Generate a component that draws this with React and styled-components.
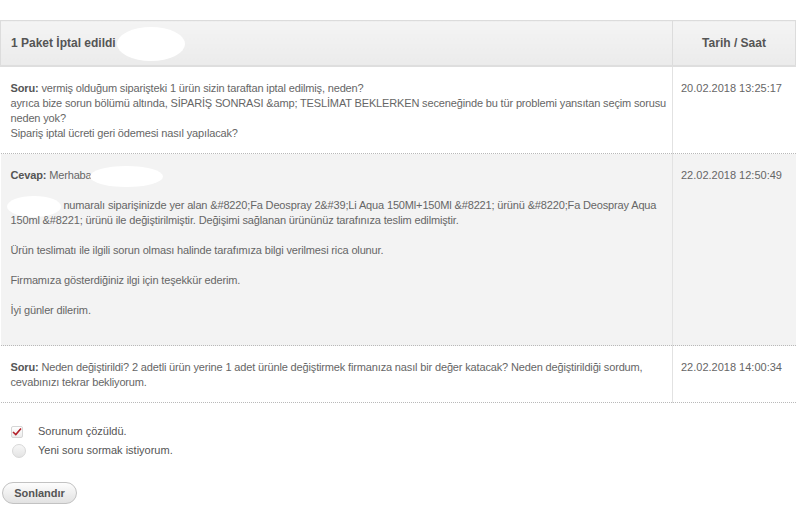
import React, { useState } from "react";
import styled, { createGlobalStyle } from "styled-components";

const GlobalStyle = createGlobalStyle`
  html, body {
    margin: 0;
    padding: 0;
    background: #fff;
  }
  body {
    font-family: "Liberation Sans", Arial, sans-serif;
    font-size: 11px;
    color: #666;
  }
`;

const messages = [
  {
    kind: "Soru",
    date: "20.02.2018 13:25:17",
    shaded: false,
    lines: [
      "vermiş olduğum siparişteki 1 ürün sizin taraftan iptal edilmiş, neden?",
      "ayrıca bize sorun bölümü altında, SİPARİŞ SONRASI &amp; TESLİMAT BEKLERKEN seceneğinde bu tür problemi yansıtan seçim sorusu neden yok?",
      "Sipariş iptal ücreti geri ödemesi nasıl yapılacak?",
    ],
  },
];

export default function App() {
  const [solved, setSolved] = useState(true);

  return (
    <Page>
      <GlobalStyle />
      <Table>
        <colgroup>
          <col style={{ width: 672 }} />
          <col />
        </colgroup>
        <thead>
          <tr>
            <HeadCell>
              1 Paket İptal edildi <Blot w={68} h={34} ml={-2} />
            </HeadCell>
            <HeadCell center>Tarih / Saat</HeadCell>
          </tr>
        </thead>
        <tbody>
          {messages.map((m, i) => (
            <Row key={i} shaded={m.shaded}>
              <TextCell>
                <Label>{m.kind}:</Label> {m.lines[0]}
                <br />
                {m.lines[1]}
                <br />
                {m.lines[2]}
              </TextCell>
              <DateCell>{m.date}</DateCell>
            </Row>
          ))}
          <Row shaded>
            <TextCell>
              <Label>Cevap:</Label> Merhaba <Blot w={73} h={21} ml={-4} />
              <br />
              <br />
              <Blot w={54} h={21} ml={-4} /> numaralı siparişinizde yer alan &amp;#8220;Fa Deospray 2&amp;#39;Li Aqua
              150Ml+150Ml &amp;#8221; ürünü &amp;#8220;Fa Deospray Aqua 150ml &amp;#8221; ürünü ile
              değiştirilmiştir. Değişimi sağlanan ürününüz tarafınıza teslim edilmiştir.
              <br />
              <br />
              Ürün teslimatı ile ilgili sorun olması halinde tarafımıza bilgi verilmesi rica olunur.
              <br />
              <br />
              Firmamıza gösterdiğiniz ilgi için teşekkür ederim.
              <br />
              <br />
              İyi günler dilerim.
              <br />
              <br />
            </TextCell>
            <DateCell>22.02.2018 12:50:49</DateCell>
          </Row>
          <Row>
            <TextCell>
              <Label>Soru:</Label> Neden değiştirildi? 2 adetli ürün yerine 1 adet ürünle değiştirmek
              firmanıza nasıl bir değer katacak? Neden değiştirildiği sordum, cevabınızı tekrar bekliyorum.
            </TextCell>
            <DateCell>22.02.2018 14:00:34</DateCell>
          </Row>
        </tbody>
      </Table>

      <Options>
        <Option onClick={() => setSolved(true)}>
          <CheckBox>
            {solved && (
              <svg width="10" height="9" viewBox="0 0 10 9">
                <path d="M1 5 L3.8 7.6 L9 1.4" fill="none" stroke="#b3202a" strokeWidth="1.6" />
              </svg>
            )}
          </CheckBox>
          Sorunum çözüldü.
        </Option>
        <Option onClick={() => setSolved(false)}>
          <Radio />
          Yeni soru sormak istiyorum.
        </Option>
      </Options>

      <Button>Sonlandır</Button>
    </Page>
  );
}

/* ================= STYLES ================= */
const Page = styled.div`
  width: 796px;
  padding-top: 20px;
`;

const Table = styled.table`
  width: 796px;
  border-collapse: collapse;
  table-layout: fixed;
`;

const HeadCell = styled.th`
  height: 44px;
  padding: 0 10px;
  text-align: ${({ center }) => (center ? "center" : "left")};
  font-size: 12px;
  font-weight: bold;
  color: #555;
  background: linear-gradient(to bottom, #f4f4f4, #ebebeb);
  border: 1px solid #dcdcdc;
  border-bottom: 2px solid #dedede;
  white-space: nowrap;
  overflow: visible;
`;

const Row = styled.tr`
  background: ${({ shaded }) => (shaded ? "#f3f3f3" : "#fff")};
  border-bottom: 1px dotted #b9b9b9;
`;

const TextCell = styled.td`
  padding: 14px 2px 12px 10px;
  line-height: 15px;
  letter-spacing: -0.15px;
  vertical-align: top;
  color: #666;
  border-right: 1px solid #e2e2e2;
`;

const DateCell = styled.td`
  padding: 14px 4px 12px 8px;
  line-height: 15px;
  vertical-align: top;
  color: #666;
  white-space: nowrap;
`;

const Label = styled.b`
  color: #555;
`;

const Blot = styled.span`
  display: inline-block;
  width: ${({ w }) => w}px;
  height: ${({ h }) => h}px;
  margin-left: ${({ ml }) => ml}px;
  margin-top: ${({ h }) => -Math.round((h - 12) / 2)}px;
  margin-bottom: ${({ h }) => -Math.round((h - 12) / 2)}px;
  vertical-align: middle;
  background: #fff;
  border-radius: 50%;
`;

const Options = styled.div`
  display: flex;
  flex-direction: column;
  gap: 4px;
  padding: 21px 0 0 11px;
`;

const Option = styled.label`
  display: flex;
  align-items: center;
  gap: 15px;
  height: 15px;
  line-height: 15px;
  font-size: 11px;
  color: #555;
  cursor: pointer;
`;

const CheckBox = styled.span`
  box-sizing: border-box;
  width: 12px;
  height: 12px;
  display: flex;
  align-items: center;
  justify-content: center;
  border: 1px solid #d6d6d6;
  border-radius: 2px;
  background: linear-gradient(to bottom, #ffffff, #ededed);
`;

const Radio = styled.span`
  box-sizing: border-box;
  flex: none;
  width: 14px;
  height: 14px;
  margin: 0 -3px 0 1px;
  border-radius: 50%;
  border: 1px solid #d8d8d8;
  background: linear-gradient(to bottom, #f7f7f7, #e4e4e4);
`;

const Button = styled.button`
  margin: 24px 0 0 2px;
  width: 75px;
  height: 22px;
  padding: 0;
  border: 1px solid #c2c2c2;
  border-radius: 11px;
  background: linear-gradient(to bottom, #fdfdfd, #e2e2e2);
  font-family: "Liberation Sans", Arial, sans-serif;
  font-size: 11px;
  font-weight: bold;
  color: #555;
  cursor: pointer;
`;
